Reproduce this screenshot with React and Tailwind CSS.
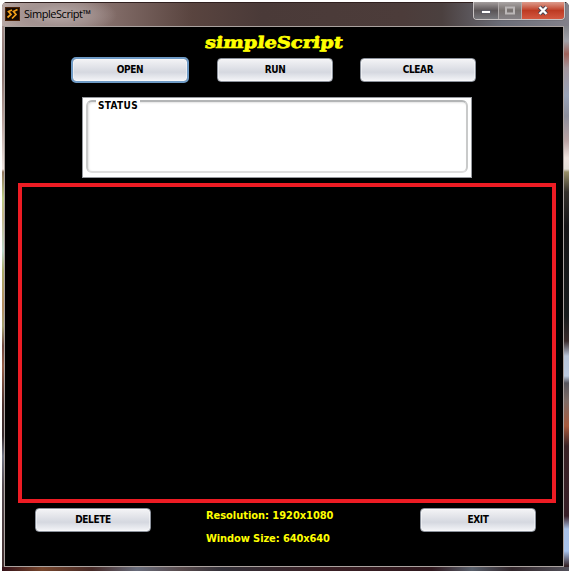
const uiFont = "font-['DejaVu_Sans_Condensed','DejaVu_Sans',sans-serif] [font-stretch:condensed]";

function Button({ children, focused = false }) {
  return (
    <button
      className={`${uiFont} h-6 w-[116px] shrink-0 rounded-[4px] border border-[#8c929c] bg-linear-to-b from-[#f4f4f6] via-[#d5d8e0] via-60% to-[#f4f5f8] text-[10px] leading-none font-bold tracking-[-0.35px] text-black shadow-[inset_0_0_0_1px_rgba(255,255,255,0.45)] ${
        focused ? "outline-2 -outline-offset-1 outline-[#6f9bc6]" : ""
      }`}
    >
      {children}
    </button>
  );
}

function AppIcon() {
  return (
    <svg className="h-[14px] w-[15px]" viewBox="0 0 15 14">
      <rect width="15" height="14" fill="#4a2108" />
      <rect x="1" y="1" width="13" height="12" fill="#160a03" />
      <path d="M7 3 3.5 4.5 6 7.5 2.5 10.5M12.5 2.5 8.5 4.5l2.5 3L7 11.5" fill="none" stroke="#f5a21b" strokeWidth="1.7" />
    </svg>
  );
}

function WindowControls() {
  return (
    <div className="flex h-[18px] w-[92px] overflow-hidden rounded-b-[4px] border border-t-0 border-[#c9c4c4] shadow-[0_0_1px_#2a2020]">
      <div className="flex w-[25px] items-center justify-center border-r border-[#b1abab] bg-linear-to-b from-[#a39d9d] via-[#5b5557] via-50% to-[#77777c]">
        <svg className="h-3 w-3" viewBox="0 0 12 12">
          <rect x="1.5" y="5.5" width="9" height="3" fill="#fff" stroke="#4d4d58" strokeWidth="0.8" />
        </svg>
      </div>
      <div className="flex w-[23px] items-center justify-center border-r border-[#b1abab] bg-linear-to-b from-[#aaa5a5] via-[#77716f] via-50% to-[#858185]">
        <svg className="h-3 w-3" viewBox="0 0 12 12">
          <rect x="2" y="2.5" width="8" height="6" fill="none" stroke="#bbb7b7" strokeWidth="2" />
        </svg>
      </div>
      <div className="flex flex-1 items-center justify-center bg-linear-to-b from-[#dc9b8c] via-[#bd3a22] via-50% to-[#d35840]">
        <svg className="h-3 w-3" viewBox="0 0 12 12">
          <path d="m2.5 2 7 7m0-7-7 7" stroke="#484554" strokeWidth="4.2" />
          <path d="m2.5 2 7 7m0-7-7 7" stroke="#fff" strokeWidth="2.4" />
        </svg>
      </div>
    </div>
  );
}

export default function App() {
  return (
    <div className="h-[573px] w-[571px] overflow-hidden bg-white p-[2px]">
      <div className="flex h-[569px] w-[567px] flex-col overflow-hidden rounded-t-[5px] bg-[#4b3c3a]">
        <header className="flex h-6 shrink-0 items-start justify-between border-t border-[#30201f] bg-[radial-gradient(ellipse_60px_20px_at_55px_12px,#b8aaa8_0%,#a39391_50%,transparent_100%),linear-gradient(to_right,#b9a9a5_0px,#8c7672_90px,#59443f_190px,#4a3a38_260px,#4c3c3a_400px,#4b403f_440px,#6b6d78_500px,#83818a_567px)] pl-[3px]">
          <div className="flex items-center gap-1 pt-[4px]">
            <AppIcon />
            <span className="font-['Open_Sans','Noto_Sans',sans-serif] text-[11px] leading-[14px] tracking-[-0.45px] whitespace-nowrap text-black">
              SimpleScript™
            </span>
          </div>
          <div className="mr-[4px] -mt-px">
            <WindowControls />
          </div>
        </header>

        <div className="flex h-[541px] shrink-0">
          <div className="w-[2px] shrink-0 bg-[linear-gradient(to_bottom,#a28c88_0px,#8e7772_50px,#b9a39d_95px,#eee4df_143px,#92775f_146px,#bbc982_172px,#c5b68a_190px,#bcd4c8_225px,#aaaa68_245px,#b58d61_280px,#a6a171_300px,#70483f_320px,#955e47_340px,#482f2c_380px,#35292b_410px,#747785_430px,#554b50_460px,#443030_541px)]" />
          <main className="flex w-[560px] shrink-0 flex-col border border-[#aaa29f] bg-black">
            <h1 className="ml-[199px] flex h-[31px] w-[140px] shrink-0 items-center justify-center">
              <span className="inline-block scale-x-[1.21] -skew-x-6 font-['DejaVu_Serif',serif] text-[16px] leading-none font-bold whitespace-nowrap text-[#ff0] [-webkit-text-stroke:0.7px_#ff0]">
                simpleScript
              </span>
            </h1>
            <div className="flex h-6 shrink-0 pl-[67px]">
              <Button focused>OPEN</Button>
              <div className="ml-[29px] flex gap-[27px]">
                <Button>RUN</Button>
                <Button>CLEAR</Button>
              </div>
            </div>
            <section className="mt-[15px] ml-[77px] h-[81px] w-[390px] shrink-0 border border-[#96999e] bg-white px-[3px] pt-[2px]">
              <div className="relative h-[73px] rounded-[6px] border-2 border-t-[#b3b5b6] border-r-[#c9caca] border-b-[#dedede] border-l-[#c9caca] shadow-[inset_1px_1px_2px_#e3e3e3]">
                <h2 className={`${uiFont} absolute -top-[2px] left-[8px] h-3 bg-white px-[2px] text-[10px] leading-[11px] font-bold tracking-[0.35px] text-black`}>
                  STATUS
                </h2>
              </div>
            </section>
            <section className="mt-[5px] ml-[13px] h-[320px] w-[538px] shrink-0 border-4 border-[#ed1c24]" />
            <footer className="mt-[5px] flex h-[38px] shrink-0 items-start pl-[30px]">
              <Button>DELETE</Button>
              <div className={`${uiFont} ml-[55px] w-[214px] text-[11px] leading-[23px] font-bold whitespace-nowrap text-[#ff0]`}>
                <p className="-mt-[4px] tracking-[-0.04px]">Resolution: 1920x1080</p>
                <p className="tracking-[-0.1px]">Window Size: 640x640</p>
              </div>
              <Button>EXIT</Button>
            </footer>
          </main>
          <div className="w-[5px] shrink-0 bg-[linear-gradient(to_bottom,#838489_0px,#a0a1a8_15px,#9e625a_28px,#a3959b_42px,#99a3b8_70px,#8d8f9c_90px,#baa4a4_115px,#eee3df_132px,#e4ded8_143px,#978f68_146px,#34302b_166px,#161517_200px,#171c1d_290px,#392b2b_315px,#b8c4d8_330px,#bccbe0_350px,#57565d_357px,#7e6c66_375px,#a85a3d_400px,#392225_420px,#381f27_490px,#a9c1e6_503px,#a8c3ed_525px,#362427_540px)]" />
        </div>
        <div className="h-[4px] bg-[linear-gradient(to_right,#341018,#76462d_40px,#472a27_90px,#686c7b_135px,#584a4c_180px,#343139_220px,#3b2025_320px,#30181e_430px,#59606c_470px,#32262b_510px,#53515a_567px)]" />
      </div>
    </div>
  );
}
